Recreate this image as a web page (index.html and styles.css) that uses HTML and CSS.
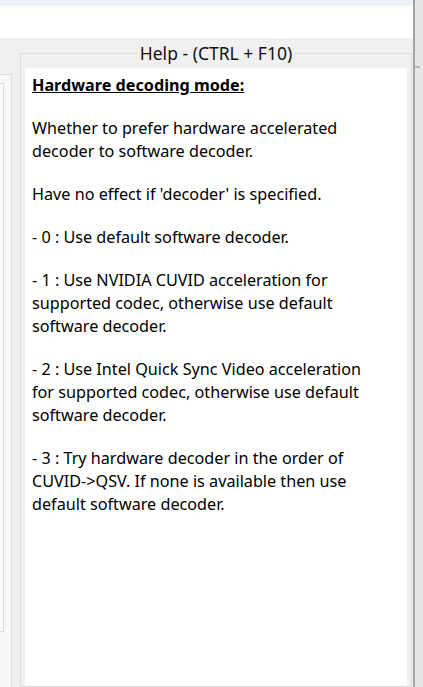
FILE: index.html
```html
<!DOCTYPE html>
<html>
<head>
<meta charset="utf-8">
<link rel="stylesheet" href="styles.css">
</head>
<body>
<div class="window">
  <div class="main">
    <div class="topband"></div>
    <div class="toolbar"></div>
    <div class="content">
      <div class="leftpanel">
        <div class="innerbox"></div>
      </div>
      <fieldset class="groupbox">
        <legend class="grouptitle">Help - (CTRL + F10)</legend>
        <div class="helpbox">
          <p class="helphead">Hardware decoding mode:</p>
          <p>Whether to prefer hardware accelerated decoder to software decoder.</p>
          <p>Have no effect if 'decoder' is specified.</p>
          <p>- 0 : Use default software decoder.</p>
          <p>- 1 : Use NVIDIA CUVID acceleration for supported codec, otherwise use default software decoder.</p>
          <p>- 2 : Use Intel Quick Sync Video acceleration for supported codec, otherwise use default software decoder.</p>
          <p>- 3 : Try hardware decoder in the order of CUVID-&gt;QSV. If none is available then use default software decoder.</p>
        </div>
      </fieldset>
    </div>
  </div>
  <div class="scrollbar">
    <div class="tick"></div>
  </div>
</div>
</body>
</html>
```
FILE: styles.css
```css
html, body {
  margin: 0;
  padding: 0;
  width: 423px;
  height: 687px;
  overflow: hidden;
  background: #f0f0f0;
  font-family: "Noto Sans", "Open Sans", sans-serif;
}
.window {
  display: flex;
  width: 423px;
  height: 687px;
}
.main {
  width: 413px;
  display: flex;
  flex-direction: column;
}
.topband {
  height: 6px;
  background: #eef2f9;
}
.toolbar {
  height: 32px;
  background: #ffffff;
}
.content {
  flex: 1;
  display: flex;
  background: #f0f0f0;
  min-height: 0;
}
.leftpanel {
  width: 11px;
  margin-top: 36px;
  border-top: 1px solid #dcdcdc;
  border-right: 1px solid #dcdcdc;
  background: #f7f7f7;
  display: flex;
  flex-direction: column;
}
.innerbox {
  width: 3px;
  height: 547px;
  margin-top: 8px;
  border-top: 1px solid #d9d9d9;
  border-right: 1px solid #d9d9d9;
  border-bottom: 1px solid #d9d9d9;
  background: #fbfbfb;
}
.groupbox {
  margin: 3px 0 0 8px;
  width: 392px;
  box-sizing: border-box;
  border: 1px solid #dcdcdc;
  padding: 3px 4px 0 4px;
  min-width: 0;
  display: flex;
  flex-direction: column;
}
.grouptitle {
  margin: 0 auto;
  padding: 0 3px;
  font-size: 17.5px;
  line-height: 24px;
  color: #111;
}
.helpbox {
  flex: 1;
  background: #ffffff;
  padding: 6px 24px 0 7px;
  font-size: 16.2px;
  line-height: 23px;
  color: #000;
}
.helpbox p {
  margin: 0 0 20px 0;
}
.helphead {
  font-weight: bold;
  text-decoration: underline;
}
.scrollbar {
  width: 8px;
  border-left: 2px solid #a3a3a3;
  background: #e6e6e6;
  display: flex;
  flex-direction: column;
}
.tick {
  margin-top: 66px;
  width: 5px;
  height: 2px;
  background: #b5b5b5;
}
```
